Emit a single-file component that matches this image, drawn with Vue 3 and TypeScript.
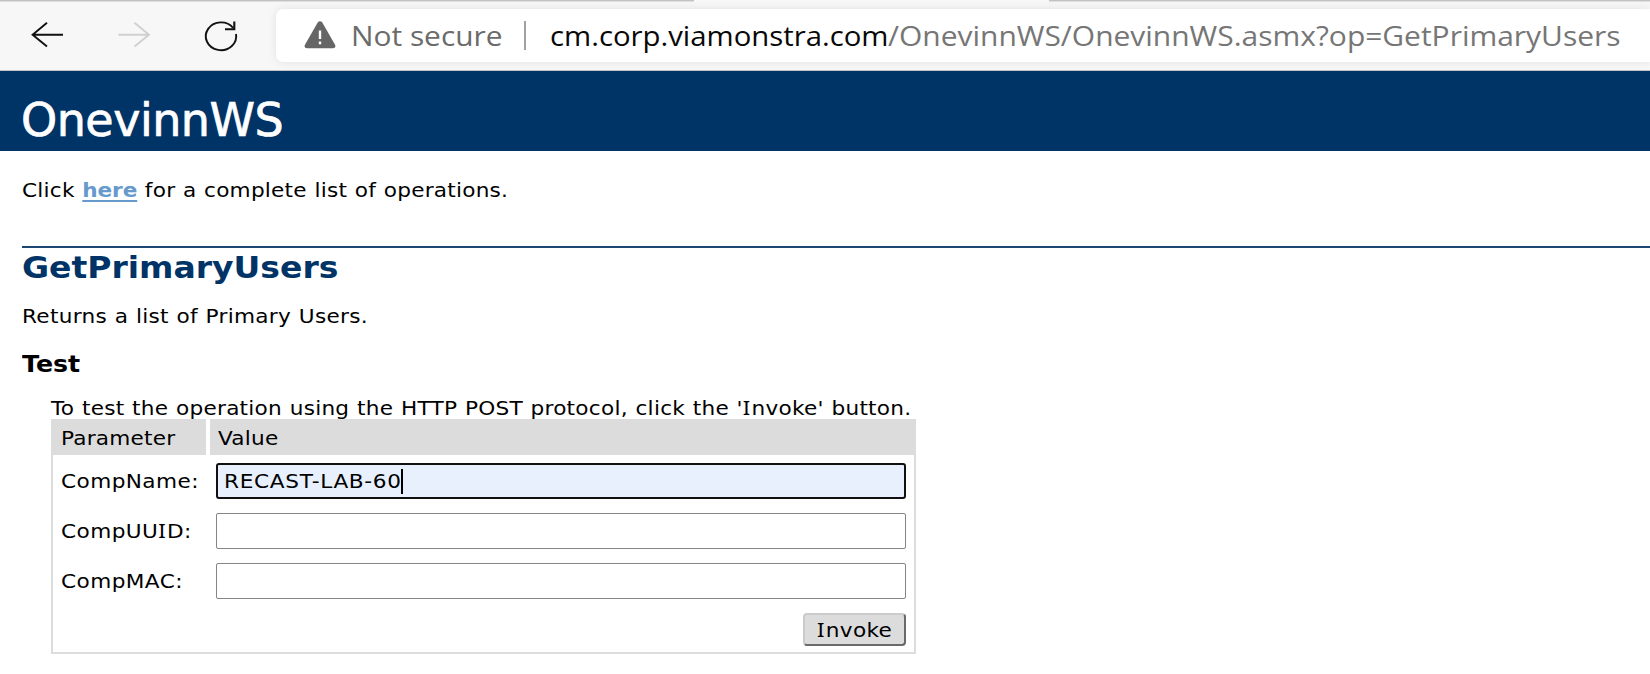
<script setup lang="ts">
import { ref } from 'vue'

interface Field {
  name: string
  label: string[]
  value: string
  focused: boolean
}

const fields = ref<Field[]>([
  { name: 'CompName', label: ['CompName:'], value: 'RECAST-LAB-60', focused: true },
  { name: 'CompUUID', label: ['CompUU', 'I', 'D:'], value: '', focused: false },
  { name: 'CompMAC', label: ['CompMAC:'], value: '', focused: false },
])
</script>

<template>
  <div class="page">
    <header class="toolbar">
      <i class="edge edge-left"></i>
      <i class="edge edge-right"></i>
      <svg class="nav" width="276" height="71" viewBox="0 0 276 71" fill="none" stroke-width="1.9">
        <path d="M63 34.7H33M47 22.8L32.6 34.7L47 46.6" stroke="#111" />
        <path d="M118.5 34.7H149M134.5 22.8L149 34.7L134.5 46.6" stroke="#d0d0d0" />
        <path d="M236 34A15.2 13.9 0 1 1 233.2 28" stroke="#111" />
        <path d="M234.3 21.5V29.2H225" stroke="#111" stroke-width="2.1" />
      </svg>
      <div class="address">
        <svg class="warning" width="32" height="28" viewBox="0 0 32 28">
          <path d="M13.7 1.6Q16 -0.9 18.3 1.6L31.2 24Q32 27.2 29 27.2H3Q0 27.2 .8 24Z" fill="#666" />
          <path d="M16 9.5V18M16 20.5V23.2" stroke="#fff" stroke-width="2.4" />
        </svg>
        <span class="security">Not secure</span>
        <i class="divider"></i>
        <span class="host">cm.corp.viamonstra.com</span>
        <span class="path">/OnevinnWS/OnevinnWS.asmx?op=GetPrimaryUsers</span>
      </div>
    </header>

    <div class="banner"><h1>OnevinnWS</h1></div>

    <main class="content">
      <p class="text intro">Click <a href="#">here</a> for a complete list of operations.</p>
      <section class="operation">
        <h2>GetPrimaryUsers</h2>
        <p class="text returns">Returns a list of Primary Users.</p>
        <h3>Test</h3>
        <form class="test" @submit.prevent>
          <p class="text hint">To test the operation using the HTTP POST protocol, click the '<span class="cap-i">I</span>nvoke' button.</p>
          <div class="panel">
            <div class="head">
              <div><span class="text">Parameter</span></div>
              <div><span class="text">Value</span></div>
            </div>
            <div v-for="f in fields" :key="f.name" class="row">
              <span class="text label"><span v-for="(part, i) in f.label" :key="i" :class="{ 'cap-i': part === 'I' }">{{ part }}</span></span>
              <div class="box" :class="{ focused: f.focused }">
                <span v-if="f.value" class="text value">{{ f.value }}</span>
                <i v-if="f.focused" class="caret"></i>
              </div>
            </div>
            <div class="actions">
              <button type="submit"><span class="text"><span class="cap-i">I</span>nvoke</span></button>
            </div>
          </div>
        </form>
      </section>
    </main>
  </div>
</template>

<style>
body { margin: 0; background: #fff; overflow: hidden; }
</style>

<style scoped>
* { box-sizing: border-box; }
.page { width: 1650px; height: 674px; overflow: hidden; color: #000; font-family: "DejaVu Sans", sans-serif; }
h1, h2, h3, p { margin: 0; white-space: nowrap; transform-origin: left center; }
h2, h3 { width: max-content; }

.toolbar { position: relative; display: flex; height: 71px; background: #f7f7f7; border-bottom: 1px solid #c4c4c4; }
.edge { position: absolute; top: 0; height: 2px; background: #c2c2c2; border-bottom: 1px solid #dedede; }
.edge-left { left: 0; width: 694px; }
.edge-right { left: 1049px; right: 0; }
.nav { flex: none; }
.address { flex: 1; display: flex; align-items: center; height: 53px; margin-top: 9px; padding-left: 28px; background: #fff; border-radius: 7px 0 0 7px; box-shadow: 0 0 8px rgba(0, 0, 0, .09); font: 28px/53px "Open Sans", "Noto Sans", sans-serif; }
.warning { flex: none; position: relative; top: -1px; }
.security, .host, .path { flex: none; white-space: nowrap; transform-origin: left center; }
.security { width: 173px; margin-left: 15px; color: #6b6b6b; transform: scaleX(1.067); }
.divider { width: 2px; height: 29px; margin-right: 24px; background: #a0a0a0; }
.host { width: 338px; color: #080808; transform: scaleX(1.047); }
.path { color: #767676; transform: scaleX(1.07); }

.banner { height: 80px; padding: 21px 0 0 21px; background: #036; }
h1 { color: #fff; font-size: 46px; font-weight: 400; line-height: 56px; letter-spacing: -.5px; -webkit-text-stroke: .7px #fff; }

.content { padding: 27px 0 0 22px; }
.text { display: block; width: max-content; font-size: 20px; line-height: 24px; letter-spacing: .3px; word-spacing: .5px; white-space: nowrap; transform: scaleX(1.08); transform-origin: left center; }
.text span { display: inline; }
.intro { margin-left: -.5px; letter-spacing: .22px; }
.intro a { color: #69c; font-weight: 700; letter-spacing: -.1px; text-decoration: underline; text-decoration-thickness: 1.5px; text-underline-offset: 3px; }
.cap-i { font-family: "Noto Sans", sans-serif; font-size: 20.4px; line-height: 1; letter-spacing: 1.2px; }
.operation { margin-top: 44px; border-top: 2px solid #1c4773; }
h2 { color: #036; font-size: 31px; line-height: 38px; transform: scaleX(1.065); }
.returns { margin-top: 18px; letter-spacing: .27px; }
h3 { margin-top: 22px; font-size: 23px; line-height: 28px; transform: scaleX(1.1); }
.test { margin: 18px 0 0 29px; }
.hint { height: 23px; letter-spacing: .24px; }
.panel { width: 865px; height: 235px; border: 2px solid #dcdcdc; border-top: 0; }
.head { display: grid; grid-template-columns: 155px 706px; column-gap: 4px; width: 865px; margin-left: -2px; height: 36px; }
.head div { padding: 7px 0 0 8px; background: #dcdcdc; }
.head div:first-child { padding-left: 10px; }
.head .text { letter-spacing: .2px; }
.row { display: grid; grid-template-columns: 155px 690px; align-items: center; height: 36px; margin: 8px 0 14px 8px; }
.row + .row { margin: 0 0 14px 8px; }
.label { letter-spacing: .4px; }
.box { display: flex; align-items: center; height: 36px; padding-left: 8px; border: 1px solid #858585; border-radius: 2px; }
.box.focused { padding-left: 6px; background: #e8f0fe; border: 2px solid #101010; border-radius: 3px; }
.value { width: 177px; flex: none; letter-spacing: .65px; }
.caret { width: 2px; height: 25px; background: #000; }
.actions { display: flex; justify-content: flex-end; padding-right: 8px; }
button { width: 103px; height: 33px; padding: 0 0 0 12px; border: 2px solid; border-color: #cbcbcb #696969 #696969 #cbcbcb; border-radius: 4px; background: #dcdcdc; color: #000; font-family: inherit; text-align: left; }
</style>
